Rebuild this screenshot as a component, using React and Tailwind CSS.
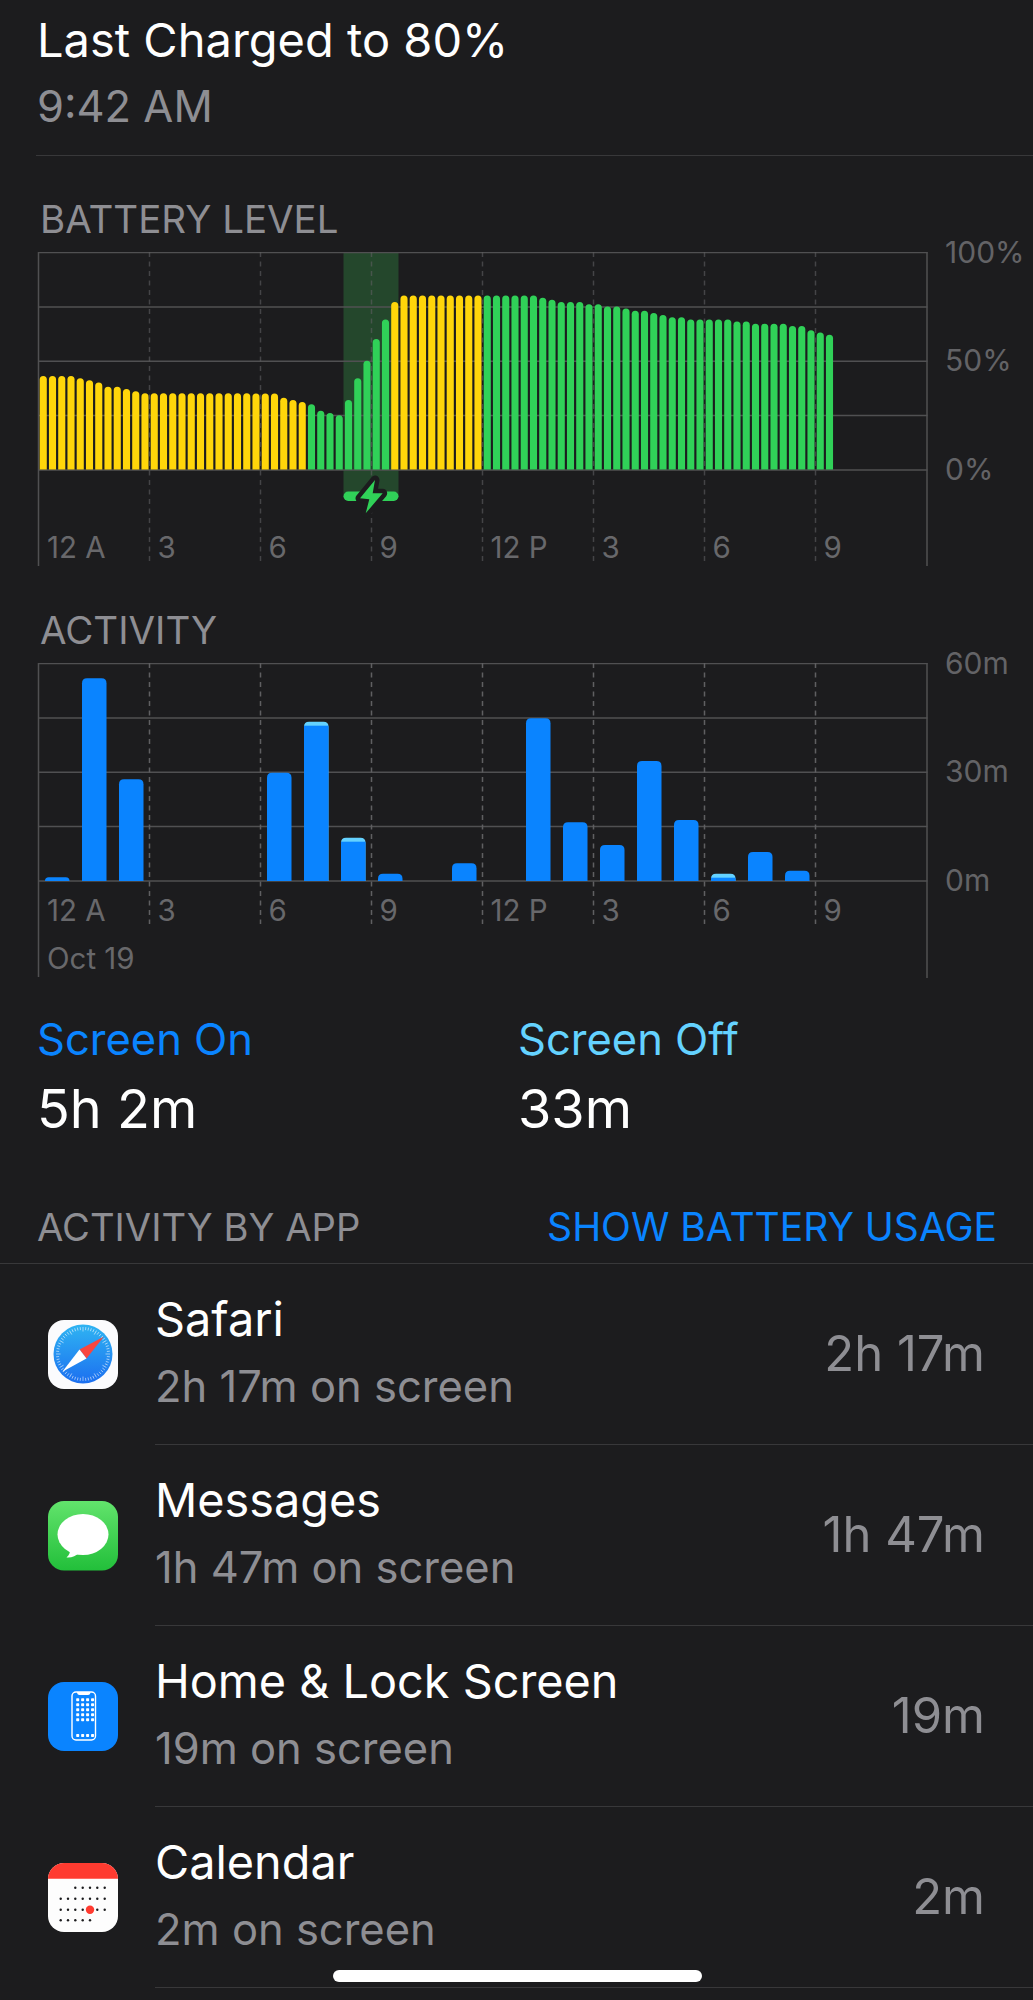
const font = { fontFamily: "Inter, 'Liberation Sans', sans-serif" };

const levels = [
  43, 43, 43, 43, 42, 41, 40, 38, 38, 37, 36, 35, 35, 35, 35, 35, 35, 35, 35, 35, 35, 35, 35, 35, 35, 35, 33, 32, 31,
  30, 27, 26, 25, 32, 42, 50, 60, 69, 77, 80, 80, 80, 80, 80, 80, 80, 80, 80, 80, 80, 80, 80, 80, 80, 79, 78, 77, 77,
  77, 76, 76, 75, 75, 74, 73, 73, 72, 71, 70, 70, 69, 69, 69, 69, 69, 68, 68, 67, 67, 67, 67, 66, 66, 64, 63, 62,
];

const isYellow = (i) => i <= 28 || (i >= 38 && i <= 47);

const activity = [
  { i: 0, top: 877.3 },
  { i: 1, top: 678.3 },
  { i: 2, top: 779.3 },
  { i: 6, top: 772.7 },
  { i: 7, top: 721.7, cap: 4 },
  { i: 8, top: 837.7, cap: 4 },
  { i: 9, top: 873.7 },
  { i: 11, top: 863.3 },
  { i: 13, top: 718.3 },
  { i: 14, top: 822.3 },
  { i: 15, top: 845 },
  { i: 16, top: 761 },
  { i: 17, top: 820 },
  { i: 18, top: 873.7, cap: 4 },
  { i: 19, top: 852 },
  { i: 20, top: 870.7 },
];

const dashX = [149.5, 260.5, 371.5, 482.5, 593.5, 704.5, 815.5];
const gridStroke = "#505052";

function BatteryChart() {
  const base = 217.5;
  return (
    <svg width="1033" height="314" viewBox="0 0 1033 314" className="block">
      <rect x="343.5" y="0" width="55" height="245" fill="#24472c" />
      {[0, 54.4, 108.75, 163.1, 217.5].map((y) => (
        <line key={y} x1="38" x2="927.5" y1={y + 0.5} y2={y + 0.5} stroke={gridStroke} strokeWidth="1.5" />
      ))}
      <line x1="38.5" x2="38.5" y1="0" y2="314" stroke={gridStroke} strokeWidth="1.5" />
      <line x1="927" x2="927" y1="0" y2="314" stroke={gridStroke} strokeWidth="1.5" />
      {levels.map((l, i) => {
        const w = 7.1;
        const x = 39.7 + i * 9.25;
        const h = l * 2.175;
        const top = base - h;
        return (
          <path
            key={i}
            d={`M${x} ${base}V${top + w / 2}A${w / 2} ${w / 2} 0 0 1 ${x + w} ${top + w / 2}V${base}Z`}
            fill={isYellow(i) ? "#ffd60a" : "#30d158"}
          />
        );
      })}
      {dashX.map((x) => (
        <line key={x} x1={x} x2={x} y1="0" y2="309" stroke="#5f5f62" strokeOpacity="0.6" strokeWidth="1.5" strokeDasharray="5 4.5" />
      ))}
      <rect x="343.5" y="239.5" width="55" height="9.5" rx="4.7" fill="#30d158" />
      <path
        d="M375 228L360 246.3L369.3 247.3L365.7 261.3L382.7 241.3L372.7 241.3Z"
        fill="#30d158"
        stroke="#1c1c1e"
        strokeWidth="9"
        strokeLinejoin="round"
        paintOrder="stroke"
      />
    </svg>
  );
}

function ActivityChart() {
  const t = 663;
  const base = 881 - t;
  return (
    <svg width="1033" height="315" viewBox="0 0 1033 315" className="block">
      {[0, 54.4, 108.75, 163.1, 217.5].map((y) => (
        <line key={y} x1="38" x2="927.5" y1={y + 0.5} y2={y + 0.5} stroke={gridStroke} strokeWidth="1.5" />
      ))}
      <line x1="38.5" x2="38.5" y1="0" y2="314" stroke={gridStroke} strokeWidth="1.5" />
      <line x1="927" x2="927" y1="0" y2="315" stroke={gridStroke} strokeWidth="1.5" />
      {dashX.map((x) => (
        <line key={x} x1={x} x2={x} y1="0" y2="261" stroke="#5f5f62" strokeWidth="1.5" strokeDasharray="5 4.5" />
      ))}
      {activity.map(({ i, top, cap }) => {
        const x = 45 + 37 * i;
        const w = 24.5;
        const y = top - t;
        const h = base - y;
        const r = Math.min(5, h);
        const d = `M${x} ${base}V${y + r}Q${x} ${y} ${x + r} ${y}H${x + w - r}Q${x + w} ${y} ${x + w} ${y + r}V${base}Z`;
        return (
          <g key={i}>
            <path d={d} fill={cap ? "#64d2ff" : "#0a84ff"} />
            {cap ? <rect x={x} y={y + cap} width={w} height={h - cap} fill="#0a84ff" /> : null}
          </g>
        );
      })}
    </svg>
  );
}

function XLabels({ className }) {
  const items = ["12 A", "3", "6", "9", "12 P", "3", "6", "9"];
  return (
    <div className={`absolute left-[39px] flex text-[29.5px] leading-[34px] text-[#68686b] ${className}`}>
      {items.map((t, i) => (
        <div key={i} className={`pl-[8px] whitespace-pre ${i === 0 ? "w-[110.5px]" : "w-[111px]"}`}>
          {t}
        </div>
      ))}
    </div>
  );
}

function YLabels({ items }) {
  return (
    <div className="absolute left-[945px] top-[-54.5px] flex flex-col text-[30px] leading-[109px] text-[#636366]">
      {items.map((t) => (
        <div key={t} className="h-[108.75px]">
          {t}
        </div>
      ))}
    </div>
  );
}

function SafariIcon() {
  const ticks = [];
  for (let a = 0; a < 360; a += 6) {
    ticks.push(
      <line
        key={a}
        x1="35"
        x2="35"
        y1="7"
        y2={a % 30 === 0 ? "11.5" : "10"}
        stroke="#ffffff"
        strokeOpacity="0.75"
        strokeWidth="0.7"
        transform={`rotate(${a} 35 34)`}
      />,
    );
  }
  return (
    <svg width="70" height="70" viewBox="0 0 70 70" className="block">
      <defs>
        <linearGradient id="saf" x1="0" x2="0" y1="0" y2="1">
          <stop offset="0" stopColor="#2fb4f2" />
          <stop offset="1" stopColor="#1c6ff0" />
        </linearGradient>
      </defs>
      <rect width="70" height="69" rx="16" fill="#fbfbfd" />
      <circle cx="35" cy="34" r="29.5" fill="url(#saf)" />
      {ticks}
      <path d="M55.7 16.7L31.5 29.5L38.5 38.5Z" fill="#f8463f" />
      <path d="M14.3 51.7L31.5 29.5L38.5 38.5Z" fill="#ffffff" />
    </svg>
  );
}

function MessagesIcon() {
  return (
    <svg width="70" height="70" viewBox="0 0 70 70" className="block">
      <defs>
        <linearGradient id="msg" x1="0" x2="0" y1="0" y2="1">
          <stop offset="0" stopColor="#62e36c" />
          <stop offset="1" stopColor="#22bf3a" />
        </linearGradient>
      </defs>
      <rect width="70" height="69.5" rx="16" fill="url(#msg)" />
      <ellipse cx="35" cy="33.5" rx="25.5" ry="20.5" fill="#ffffff" />
      <path d="M22 47C22.5 51 21.5 54 18.5 56.5C23.5 57 28 55 31 52Z" fill="#ffffff" />
    </svg>
  );
}

function HomeIcon() {
  const dots = [];
  [0, 1, 2, 3, 4].forEach((r) =>
    [0, 1, 2, 3].forEach((c) =>
      dots.push(<rect key={`${r}-${c}`} x={28.2 + c * 4.95} y={16.3 + r * 5} width="3" height="3" rx="0.7" fill="#ffffff" />),
    ),
  );
  [0, 1, 2, 3].forEach((c) =>
    dots.push(<rect key={`d-${c}`} x={28.2 + c * 4.95} y="52" width="3" height="3" rx="0.7" fill="#ffffff" />),
  );
  return (
    <svg width="70" height="70" viewBox="0 0 70 70" className="block">
      <rect width="70" height="69" rx="16" fill="#0a84ff" />
      <rect x="24" y="10" width="23.5" height="48" rx="4" fill="none" stroke="#ffffff" strokeWidth="1.4" />
      <path d="M29 10H42.5C42.5 12 41.5 13 40 13H31.5C30 13 29 12 29 10Z" fill="#ffffff" />
      {dots}
    </svg>
  );
}

function CalendarIcon() {
  const xs = [12.7, 20, 27.3, 34.7, 42, 49.3, 56.7];
  const rows = [
    [24.7, [2, 3, 4, 5, 6]],
    [35.7, [0, 1, 2, 3, 4, 5, 6]],
    [46.7, [0, 1, 2, 3, 5, 6]],
    [57.3, [0, 1, 2, 3, 4]],
  ];
  return (
    <svg width="70" height="70" viewBox="0 0 70 70" className="block">
      <rect width="70" height="69" rx="16" fill="#fdfdfd" />
      <path d="M0 15.7V16A16 16 0 0 1 16 0H54A16 16 0 0 1 70 16V15.7Z" fill="#ff3b30" />
      {rows.map(([y, cols]) =>
        cols.map((c) => <circle key={`${y}-${c}`} cx={xs[c]} cy={y} r="1.2" fill="#1c1c1e" />),
      )}
      <circle cx="42" cy="46.7" r="4.2" fill="#ff3b30" />
    </svg>
  );
}

const apps = [
  { name: "Safari", time: "2h 17m", Icon: SafariIcon },
  { name: "Messages", time: "1h 47m", Icon: MessagesIcon },
  { name: "Home & Lock Screen", time: "19m", Icon: HomeIcon },
  { name: "Calendar", time: "2m", Icon: CalendarIcon },
];

export default function App() {
  return (
    <div className="relative h-[2000px] w-[1033px] overflow-hidden bg-[#1c1c1e]" style={font}>
      <div className="ml-[36px] border-b border-[#38383a] pb-[16px] pt-[7px]">
        <div className="h-[66px] pl-[1px] text-[47px] leading-[66px] text-white">Last Charged to 80%</div>
        <div className="h-[66px] pl-[1px] text-[43.5px] leading-[66px] text-[#8e8e93]">9:42 AM</div>
      </div>

      <div className="ml-[40px] mt-[43px] h-[41px] text-[38.5px] leading-[41px] text-[#8e8e93]">BATTERY LEVEL</div>
      <div className="relative mt-[12px] h-[314px]">
        <BatteryChart />
        <XLabels className="top-[278px]" />
        <YLabels items={["100%", "50%", "0%"]} />
      </div>

      <div className="ml-[40px] mt-[44px] h-[41px] text-[38.5px] leading-[41px] text-[#8e8e93]">ACTIVITY</div>
      <div className="relative mt-[12px] h-[315px]">
        <ActivityChart />
        <XLabels className="top-[230px]" />
        <div className="absolute left-[47px] top-[278px] text-[29.5px] leading-[34px] text-[#68686b]">Oct 19</div>
        <YLabels items={["60m", "30m", "0m"]} />
      </div>

      <div className="ml-[37px] mt-[36px] grid grid-cols-[481px_1fr]">
        <div>
          <div className="h-[50px] text-[43.5px] leading-[50px] text-[#0a84ff]">Screen On</div>
          <div className="mt-[15px] h-[60px] text-[54px] leading-[60px] text-white">5h 2m</div>
        </div>
        <div>
          <div className="h-[50px] text-[43.5px] leading-[50px] text-[#64d2ff]">Screen Off</div>
          <div className="mt-[15px] h-[60px] text-[54px] leading-[60px] text-white">33m</div>
        </div>
      </div>

      <div className="mt-[63px] flex h-[62px] items-start justify-between border-b border-[#38383a] pl-[37px] pr-[36px]">
        <div className="h-[50px] text-[38.2px] leading-[50px] text-[#8e8e93]">ACTIVITY BY APP</div>
        <div className="h-[50px] text-[39px] leading-[50px] text-[#0a84ff]">SHOW BATTERY USAGE</div>
      </div>

      {apps.map(({ name, time, Icon }) => (
        <div key={name} className="flex h-[181px]">
          <div className="ml-[48px] mt-[56px] h-[70px] w-[70px] shrink-0">
            <Icon />
          </div>
          <div className="ml-[37px] flex flex-1 items-center justify-between border-b border-[#38383a] pr-[48px]">
            <div className="pb-[4px]">
              <div className="h-[50px] text-[46.8px] leading-[50px] text-white">{name}</div>
              <div className="mt-[17px] h-[50px] text-[43.5px] leading-[50px] text-[#8e8e93]">{time} on screen</div>
            </div>
            <div className="text-[49px] leading-[50px] text-[#8e8e93]">{time}</div>
          </div>
        </div>
      ))}

      <div className="absolute left-[333px] top-[1970px] h-[12px] w-[369px] rounded-full bg-white" />
    </div>
  );
}
